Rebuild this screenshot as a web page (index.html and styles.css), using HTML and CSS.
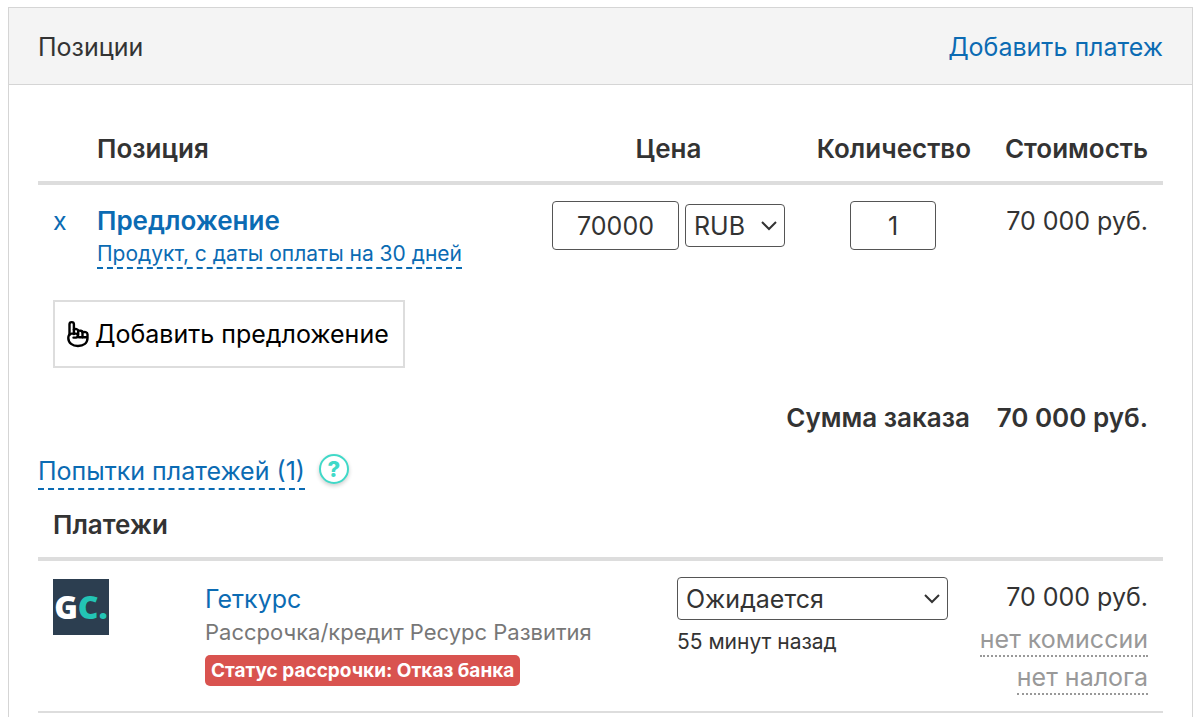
FILE: index.html
```html
<!DOCTYPE html>
<html lang="ru">
<head>
<meta charset="utf-8">
<title>Позиции заказа</title>
<meta name="viewport" content="width=device-width, initial-scale=1">
<link rel="stylesheet" href="styles.css">
</head>
<body>
    <div class="panel">
        <div class="panel-heading">
            <span>Позиции</span>
            <a href="#">Добавить платеж</a>
        </div>

        <div class="panel-body">
            <table class="table positions">
                <colgroup>
                    <col class="col-remove">
                    <col>
                    <col class="col-price">
                    <col class="col-count">
                    <col class="col-cost">
                </colgroup>
                <thead>
                    <tr>
                        <th></th>
                        <th>Позиция</th>
                        <th class="center">Цена</th>
                        <th class="right">Количество</th>
                        <th class="right">Стоимость</th>
                    </tr>
                </thead>
                <tbody>
                    <tr>
                        <td><a href="#" class="remove">x</a></td>
                        <td>
                            <a href="#" class="offer-title">Предложение</a>
                            <a href="#" class="dashed offer-sub">Продукт, с даты оплаты на 30 дней</a>
                        </td>
                        <td>
                            <div class="price">
                                <input type="text" class="field" name="price" value="70000" aria-label="Цена">
                                <div class="select currency">
                                    <select name="currency" aria-label="Валюта">
                                        <option>RUB</option>
                                        <option>USD</option>
                                    </select>
                                    <svg viewBox="0 0 16 10"><path d="M1 1l7 7 7-7"/></svg>
                                </div>
                            </div>
                        </td>
                        <td><input type="text" class="field count" name="count" value="1" aria-label="Количество"></td>
                        <td class="right">70 000 руб.</td>
                    </tr>
                </tbody>
            </table>

            <button type="button" class="add-offer">
                <svg viewBox="0 0 22 28">
                    <path d="M2.500 15V4.300a2.200 2.200 0 0 1 4.400 0V14"/>
                    <path d="M6.900 9.500c1.500-1 4-.5 4.300 1.400 1.600-.6 4-.2 4.300 1.300 1.800-.6 5 0 5 2v3.800c0 5-4 8-9.500 8s-9.700-3-9.700-8c0-2.500 1-4.400 3.500-4.400h4.200c2.400 0 2.400 4 0 4H6.500"/>
                    <path d="M11.200 11V15M15.500 12.500v5M12 17.300h7.500"/>
                </svg>
                <span>Добавить предложение</span>
            </button>

            <div class="total">
                <span>Сумма заказа</span>
                <span class="total-sum">70 000 руб.</span>
            </div>

            <div class="attempts">
                <a href="#" class="dashed">Попытки платежей (1)</a>
                <button type="button" class="help" aria-label="Помощь">?</button>
            </div>

            <table class="table payments">
                <colgroup>
                    <col class="col-logo">
                    <col>
                    <col class="col-status">
                    <col class="col-sum">
                </colgroup>
                <thead>
                    <tr><th colspan="4">Платежи</th></tr>
                </thead>
                <tbody>
                    <tr>
                        <td>
                            <div class="logo"><span>G</span><span class="logo-c">C.</span></div>
                        </td>
                        <td>
                            <a href="#" class="pay-name">Геткурс</a>
                            <div class="pay-type">Рассрочка/кредит Ресурс Развития</div>
                            <span class="label">Статус рассрочки: Отказ банка</span>
                        </td>
                        <td>
                            <div class="select">
                                <select name="status" aria-label="Статус платежа">
                                    <option>Ожидается</option>
                                    <option>Получен</option>
                                </select>
                                <svg viewBox="0 0 16 10"><path d="M1 1l7 7 7-7"/></svg>
                            </div>
                            <div class="ago">55 минут назад</div>
                        </td>
                        <td class="right">
                            <div class="pay-sum">70 000 руб.</div>
                            <a href="#" class="dotted">нет комиссии</a>
                            <a href="#" class="dotted">нет налога</a>
                        </td>
                    </tr>
                </tbody>
            </table>
        </div>
    </div>
</body>
</html>
```
FILE: styles.css
```css
*{
    box-sizing: border-box;
}
body{
    display: flex;
    flex-direction: column;
    min-height: 100vh;
    margin: 0;
    padding: 7px 7px 0 8px;
    background-color: #fff;
    color: #333;
    font-family: Inter, Roboto, "Liberation Sans", sans-serif;
    font-size: 25px;
    line-height: 40px;
}
a{
    color: #0b6bb3;
    text-decoration: none;
}
input, select, button{
    font: inherit;
    color: inherit;
}

.panel{
    flex: 1;
    border: 1px solid #d5d5d5;
    border-bottom: 0;
}
.panel-heading{
    display: flex;
    justify-content: space-between;
    padding: 19px 29px 17px;
    background-color: #f4f4f4;
    border-bottom: 1px solid #d5d5d5;
}
.panel-body{
    padding: 28px 29px 0;
}

/* tables */
.table{
    width: 100%;
    table-layout: fixed;
    border-collapse: collapse;
}
.table th, .table td{
    padding: 16px 15px;
    text-align: left;
    vertical-align: top;
}
.table th{
    padding-bottom: 12px;
    font-size: 26px;
    font-weight: 600;
    border-bottom: 4px solid #ddd;
}
.table .center{
    text-align: center;
}
.table .right{
    text-align: right;
    white-space: nowrap;
}
.col-remove{
    width: 44px;
}
.col-price{
    width: 263px;
}
.col-count{
    width: 186px;
}
.col-cost{
    width: 177px;
}
.col-logo{
    width: 152px;
}
.col-status{
    width: 301px;
}
.col-sum{
    width: 200px;
}

.offer-title{
    display: block;
    font-size: 26px;
    font-weight: 600;
}
.dashed{
    display: block;
    width: fit-content;
    border-bottom: 2px dashed #0b6bb3;
}
.offer-sub{
    font-size: 21px;
    line-height: 26px;
    white-space: nowrap;
}

/* form controls */
.price{
    display: flex;
    align-items: center;
    gap: 6px;
}
.field{
    flex: 1;
    min-width: 0;
    height: 49px;
    padding: 0;
    border: 1px solid #555;
    border-radius: 4px;
    background-color: #fff;
    text-align: center;
}
.count{
    display: block;
    width: 86px;
    margin: 0 auto;
}
.select{
    display: grid;
    align-items: center;
}
.select select{
    grid-area: 1 / 1;
    width: 100%;
    height: 43px;
    padding: 0 8px;
    border: 1px solid #555;
    border-radius: 4px;
    background-color: #fff;
    appearance: none;
}
.select svg{
    grid-area: 1 / 1;
    justify-self: end;
    width: 16px;
    height: 10px;
    margin-right: 8px;
    fill: none;
    stroke: #333;
    stroke-width: 2;
    pointer-events: none;
}
.currency{
    width: 100px;
}

.add-offer{
    display: flex;
    align-items: center;
    gap: 6px;
    margin: 15px 0 0 15px;
    padding: 12px 14px 12px 12px;
    border: 2px solid #ddd;
    background-color: #fff;
    color: #000;
}
.add-offer svg{
    width: 22px;
    height: 28px;
    fill: none;
    stroke: #000;
    stroke-width: 2.400;
    stroke-linejoin: round;
    stroke-linecap: round;
}

.total{
    display: flex;
    justify-content: flex-end;
    margin-top: 30px;
    padding-right: 15px;
    font-size: 26px;
    font-weight: 600;
}
.total-sum{
    width: 178px;
    text-align: right;
}

.attempts{
    display: flex;
    align-items: flex-start;
    gap: 14px;
    margin-top: 16px;
    line-height: 34px;
}
.help{
    width: 30px;
    height: 30px;
    padding: 0;
    border: 2px solid #40d9c8;
    border-radius: 50%;
    background-color: #fff;
    box-shadow: 0 2px 4px rgba(0, 0, 0, 0.2);
    color: #40d9c8;
    font-size: 22px;
    font-weight: 800;
    line-height: 26px;
}

/* payments */
.payments th{
    padding-top: 15px;
}
.payments tbody tr{
    border-bottom: 2px solid #ddd;
}
.logo{
    display: flex;
    align-items: center;
    justify-content: center;
    width: 56px;
    height: 56px;
    margin-top: 2px;
    background-color: #2c3e50;
    color: #fff;
    font-family: "Open Sans", sans-serif;
    font-size: 32px;
    font-weight: 800;
}
.logo-c{
    color: #23c4b5;
}
.pay-name{
    display: block;
    line-height: 44px;
}
.pay-type{
    color: #777;
    font-size: 22px;
    line-height: 22px;
}
.label{
    display: block;
    width: fit-content;
    margin-top: 12px;
    padding: 0 6px;
    border-radius: 5px;
    background-color: #d9534f;
    color: #fff;
    font-size: 19px;
    font-weight: 700;
    line-height: 31px;
    white-space: nowrap;
}
.ago{
    font-size: 21px;
    line-height: 44px;
}
.pay-sum{
    margin-bottom: 6px;
}
.dotted{
    display: block;
    width: fit-content;
    margin: 0 0 4px auto;
    border-bottom: 2px dotted #999;
    color: #999;
    line-height: 32px;
}
.dotted:last-child{
    margin-bottom: 0;
}
```
